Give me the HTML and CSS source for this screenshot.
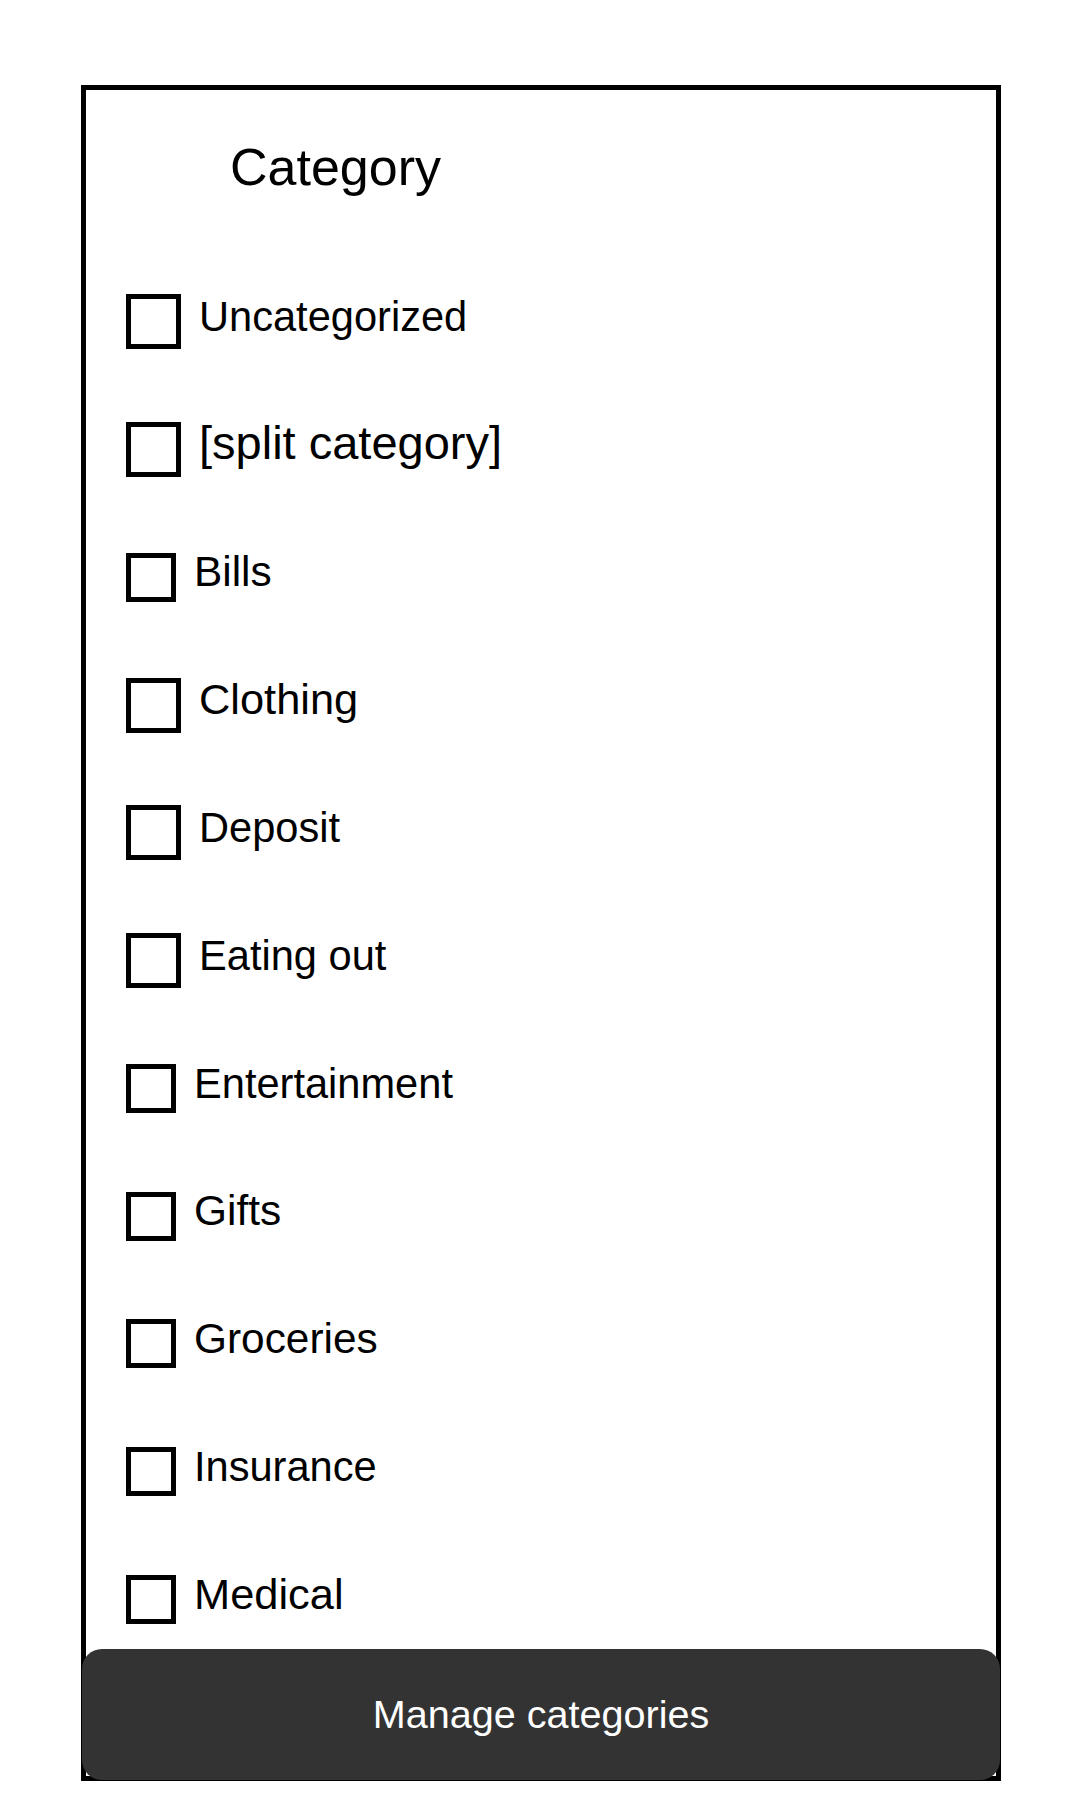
FILE: index.html
```html
<!DOCTYPE html>
<html lang="en">
<head>
<meta charset="utf-8">
<title>Category</title>
<link rel="stylesheet" href="styles.css">
</head>
<body>
<div class="frame">
  <h1 class="title">Category</h1>
  <ul class="list">
    <li class="row"><span class="cb"></span><span class="lbl">Uncategorized</span></li>
    <li class="row"><span class="cb"></span><span class="lbl lbl-xl">[split category]</span></li>
    <li class="row"><span class="cb cb-sm"></span><span class="lbl lbl-m">Bills</span></li>
    <li class="row"><span class="cb"></span><span class="lbl lbl-l">Clothing</span></li>
    <li class="row"><span class="cb"></span><span class="lbl">Deposit</span></li>
    <li class="row"><span class="cb"></span><span class="lbl">Eating out</span></li>
    <li class="row"><span class="cb cb-sm"></span><span class="lbl">Entertainment</span></li>
    <li class="row"><span class="cb cb-sm"></span><span class="lbl lbl-m">Gifts</span></li>
    <li class="row"><span class="cb cb-sm"></span><span class="lbl lbl-m">Groceries</span></li>
    <li class="row"><span class="cb cb-sm"></span><span class="lbl">Insurance</span></li>
    <li class="row"><span class="cb cb-sm"></span><span class="lbl lbl-l">Medical</span></li>
  </ul>
  <button class="manage" type="button">Manage categories</button>
</div>
</body>
</html>
```
FILE: styles.css
```css
html, body {
  margin: 0;
  padding: 0;
  background: #ffffff;
}

body {
  font-family: "Liberation Sans", Arial, sans-serif;
  color: #000000;
}

.frame {
  position: relative;
  box-sizing: border-box;
  width: 920px;
  height: 1696px;
  margin: 85px 0 0 81px;
  border: 5px solid #000000;
}

.title {
  margin: 51px 0 0 144px;
  font-size: 52px;
  font-weight: normal;
  line-height: 52px;
}

.list {
  list-style: none;
  margin: 65px 0 0 0;
  padding: 0 0 0 40px;
}

.row {
  display: flex;
  align-items: center;
  gap: 18px;
  height: 127.75px;
}

.cb {
  box-sizing: border-box;
  flex: none;
  width: 55px;
  height: 55px;
  border: 5px solid #000000;
  background: #ffffff;
}

.cb-sm {
  width: 50px;
  height: 49px;
}

.lbl {
  font-size: 41.6px;
  line-height: 1;
  margin-bottom: 10px;
  white-space: nowrap;
}

.lbl-m { font-size: 42.4px; }
.lbl-l { font-size: 43.4px; }
.lbl-xl { font-size: 47px; margin-bottom: 14px; }

.manage {
  position: absolute;
  left: -4px;
  right: -4px;
  bottom: -4px;
  height: 131px;
  border: none;
  border-radius: 20px;
  background: #333333;
  color: #ffffff;
  font-family: "Liberation Sans", Arial, sans-serif;
  font-size: 39.6px;
  line-height: 1;
  padding: 0;
  cursor: pointer;
}
```
